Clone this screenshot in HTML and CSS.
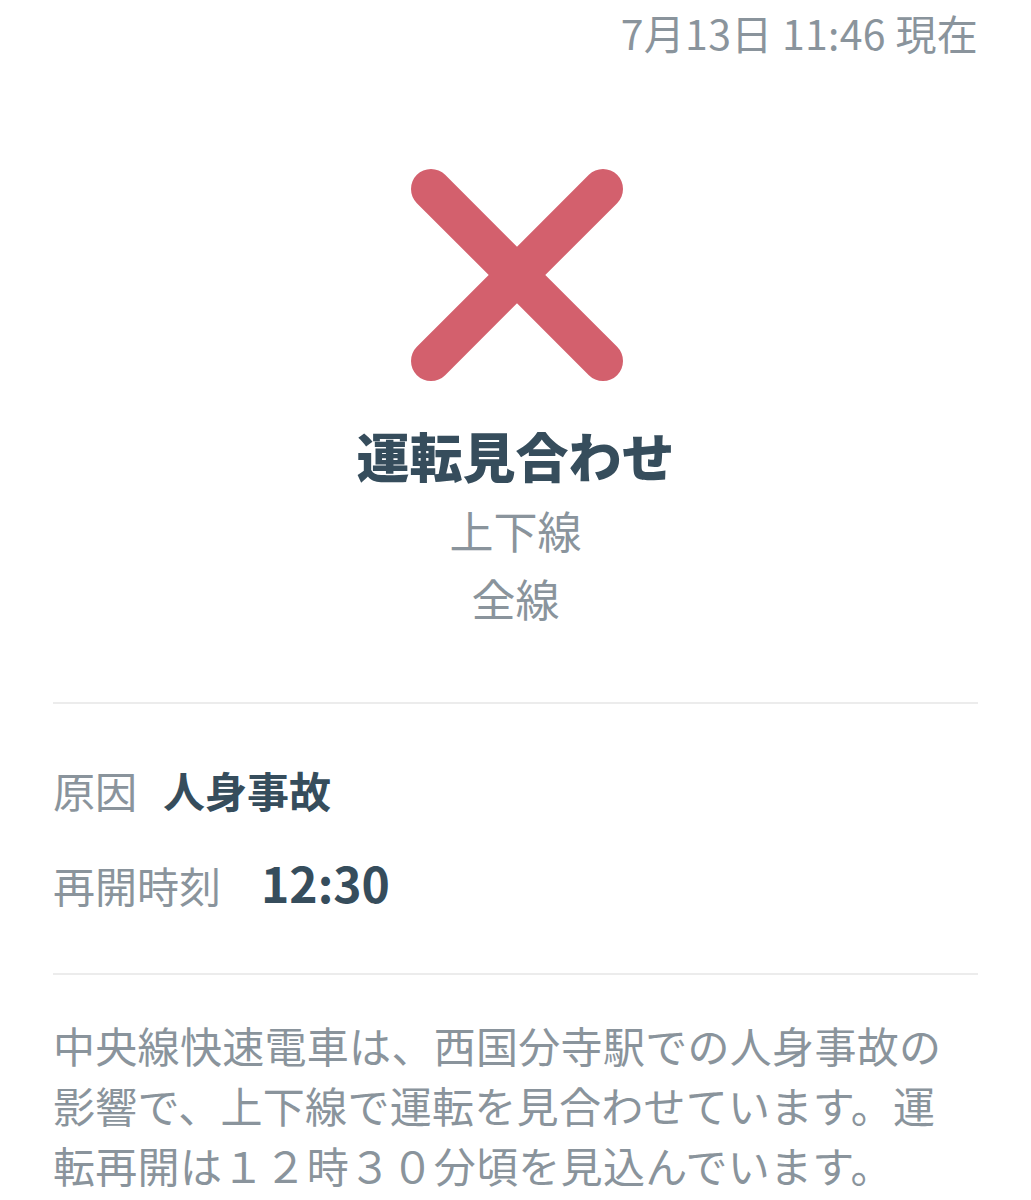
FILE: index.html
```html
<!DOCTYPE html>
<html lang="ja">
	<head>
		<meta charset="utf-8">
		<title>運行情報</title>
		<link rel="stylesheet" href="styles.css">
	</head>
	<body>
		<div id="content">
			<p class="time">7月13日 11:46 現在</p>
			<div class="mark">
				<svg width="212" height="212" viewBox="0 0 212 212">
					<path d="M20 20L192 192M192 20L20 192" stroke="#d3606d" stroke-width="40" stroke-linecap="round" fill="none"/>
				</svg>
			</div>
			<h1 class="status">運転見合わせ</h1>
			<p class="sub">上下線</p>
			<p class="sub">全線</p>
			<hr class="line">
			<div class="info">
				<div class="row"><span class="label">原因</span><span class="value">人身事故</span></div>
				<div class="row"><span class="label">再開時刻</span><span class="value num">12:30</span></div>
			</div>
			<hr class="line">
			<p class="detail">中央線快速電車は、西国分寺駅での人身事故の影響で、上下線で運転を見合わせています。運転再開は１２時３０分頃を見込んでいます。</p>
		</div>
	</body>
</html>
```

FILE: styles.css
```css
*{margin: 0;padding: 0;}
body{
	background: #fff;
	font-family: "Noto Sans CJK JP", "Noto Sans", sans-serif;
	color: #8a949c;
}
#content{
	padding: 0 53px;
}
.time{
	padding-top: 4px;
	font-size: 41px;line-height: 56px;
	letter-spacing: 0.3px;
	text-align: right;
}
.mark{
	margin-top: 109px;
	height: 212px;
	display: flex;
	justify-content: center;
}
.mark svg{
	display: block;
	margin-left: 2px;
}
.status{
	margin-top: 39px;
	font-size: 53px;line-height: 70px;
	font-weight: 900;
	color: #364d5c;
	text-align: center;
}
.sub{
	font-size: 44px;line-height: 68px;
	text-align: center;
}
.status + .sub{margin-top: 6px;}
.line{
	border: 0;
	height: 2px;
	background: #ececec;
	margin-top: 70px;
}
.info{
	margin-top: 56px;
	display: flex;
	flex-direction: column;
	gap: 32px;
}
.row{
	display: flex;
	align-items: baseline;
	gap: 26px;
	font-size: 42px;line-height: 60px;
}
.value{
	font-weight: bold;
	color: #364d5c;
}
.num{
	font-size: 48px;
	margin-left: 14px;
}
.info + .line{margin-top: 58px;}
.detail{
	margin-top: 40px;
	max-width: 900px;
	font-size: 42px;line-height: 60px;
	letter-spacing: 0.3px;
}
```
